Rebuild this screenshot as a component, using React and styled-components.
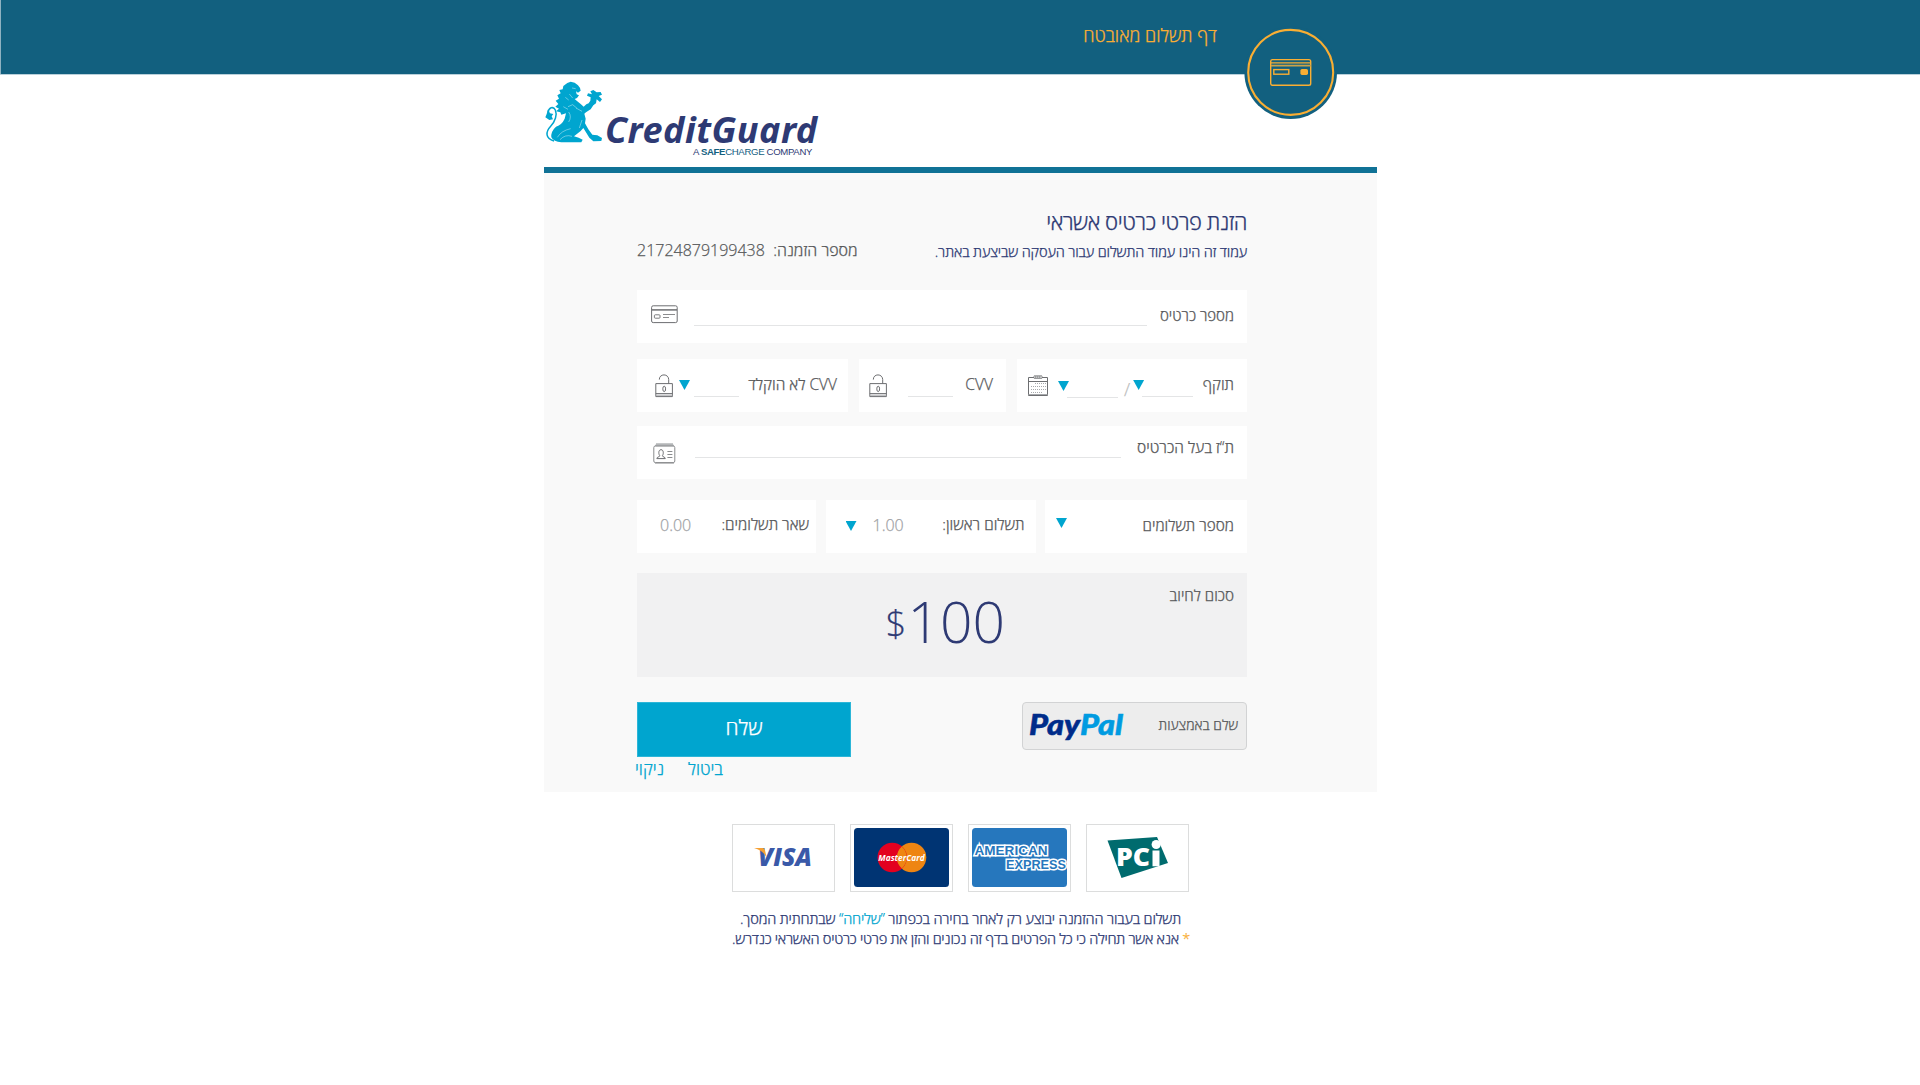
import React from "react";
import styled, { createGlobalStyle } from "styled-components";

const Global = createGlobalStyle`
  * { box-sizing: border-box; }
  body { margin: 0; background: #fff; font-family: "Open Sans", "Noto Sans", sans-serif; font-weight: 300; overflow: hidden; }
  svg { display: block; flex: none; }
`;

const Header = styled.header`
  height: 75px;
  background: #12607f;
  border-bottom: 1px solid #b9d0da;
  box-shadow: inset 1px 0 #8fb2c1;
`;
const Column = styled.div`
  position: relative;
  width: 833px;
  margin-left: 544px;
`;
const HeaderRow = styled(Column)`
  display: flex;
  justify-content: flex-end;
  padding: 21px 160px 0 0;
`;
const Badge = styled.svg`
  position: absolute;
  left: 700px;
  top: 26px;
`;
const Text = styled.span`
  direction: ${(p) => (p.$ltr ? "ltr" : "rtl")};
  white-space: pre;
  flex: none;
  display: block;
  color: ${(p) => p.$color || "#58595b"};
  font-size: ${(p) => p.$size || 15}px;
  line-height: ${(p) => p.$line || 28}px;
  letter-spacing: ${(p) => p.$track || 0}px;
  font-weight: 300;
  -webkit-text-stroke: ${(p) => (p.$stroke === undefined ? 0.25 : p.$stroke)}px;
  margin: ${(p) => p.$margin || 0};
`;
const Brand = styled.div`
  display: flex;
  height: 92px;
  padding: 6px 0 0 1px;
`;
const BrandWords = styled.div`
  display: flex;
  flex-direction: column;
  padding-top: 27px;
  margin-left: -2px;
`;
const BrandName = styled.div`
  font: italic 700 36px/44px "Noto Sans", "Open Sans", sans-serif;
  letter-spacing: 0.5px;
  color: #2e3a74;
  height: 38px;
`;
const Tagline = styled.div`
  font: 400 9.6px/12px "Liberation Sans", Arial, sans-serif;
  letter-spacing: -0.33px;
  color: #2e3a74;
  padding-left: 88px;
  white-space: nowrap;
  b { color: #12607f; font-weight: 700; }
  i { color: #12607f; font-style: normal; }
`;
const Panel = styled.main`
  height: 625px;
  border-top: 6px solid #107296;
  background: #f9f9f9;
  padding: 32px 130px 0 93px;
`;
const Heading = styled.div`
  display: flex;
  justify-content: flex-end;
`;
const SubHeading = styled.div`
  display: flex;
  justify-content: space-between;
  height: 53px;
`;
const Row = styled.div`
  display: flex;
  justify-content: space-between;
  margin-bottom: ${(p) => p.$after}px;
`;
const Field = styled.label`
  display: flex;
  align-items: flex-start;
  justify-content: flex-end;
  width: ${(p) => p.$width || 610}px;
  height: 53px;
  padding-right: ${(p) => (p.$end === undefined ? 13 : p.$end)}px;
  background: #fff;
`;
const Line = styled.span`
  flex: none;
  width: ${(p) => p.$width}px;
  height: 1px;
  margin: ${(p) => p.$margin};
  background: #e4e5e6;
`;
const Arrow = styled.span`
  flex: none;
  width: 11px;
  height: 10px;
  background: #00a5cf;
  clip-path: polygon(0 0, 100% 0, 50% 100%);
  margin: ${(p) => p.$margin};
`;
const Spacer = styled.span`
  flex: 1;
`;
const Inset = styled.span`
  flex: none;
  margin: ${(p) => p.$margin};
`;
const Total = styled.section`
  display: grid;
  grid-template-columns: 368px 1fr;
  height: 104px;
  background: #f1f1f2;
  margin-bottom: 25px;
`;
const Amount = styled.div`
  display: flex;
  justify-content: flex-end;
  gap: 1px;
  padding-top: 9px;
`;
const Actions = styled.div`
  display: flex;
  justify-content: space-between;
  align-items: flex-start;
`;
const Submit = styled.button`
  display: flex;
  justify-content: center;
  width: 214px;
  height: 55px;
  border: 1px solid #2cb6d8;
  background: #00a5cf;
  padding: 10px 0 0;
  font-family: inherit;
`;
const PayPal = styled.button`
  display: flex;
  width: 225px;
  height: 48px;
  border: 1.5px solid #d2d3d4;
  border-radius: 4px;
  background: #ededed;
  padding: 8px 8px 0 6px;
  font-family: inherit;
`;
const Links = styled.nav`
  display: flex;
  gap: 24px;
  margin-left: -2px;
`;
const Cards = styled.div`
  display: flex;
  gap: 15px;
  padding: 32px 0 0 188px;
`;
const Card = styled.div`
  display: flex;
  align-items: center;
  justify-content: center;
  width: 103px;
  height: 68px;
  padding-bottom: 1px;
  border: 1px solid #dcdddd;
`;
const Notes = styled.footer`
  display: flex;
  flex-direction: column;
  align-items: flex-end;
  padding: 16px 187px 0 0;
`;
const Accent = styled.span`
  color: ${(p) => p.$color};
`;

const Lion = () => (
  <svg width="62" height="64" viewBox="11 7 186 192">
    <path
      fill="#00a5cf"
      d="M66 22 L78 13 L88 9 L100 12 L110 20 Q117 27 118 36 L110 42 L104 38 L106 47 L113 50 L107 58 L100 61 L106 66 L118 76 L127 84 L135 77 L142 74 L147 66 L148 56 L137 51 L140 44 L152 47 L147 38 L156 34 L166 41 L178 40 L182 48 L172 52 L182 62 L176 70 L166 62 L164 74 L156 80 L148 92 L134 101 L129 105 L133 120 L131 134 L141 152 L153 168 L168 170 L182 178 L180 187 L156 188 L144 177 L126 148 L118 157 L98 173 L112 177 L124 183 L120 191 L60 191 Q37 190 30 176 Q28 158 44 144 Q62 138 70 120 L74 104 L60 108 L57 101 L44 98 L53 90 L42 84 L51 76 L43 66 L53 60 L48 50 L58 44 L54 34 L64 32 Z"
    />
    <path d="M38 187 C12 180 12 160 28 143 C42 128 48 108 42 94 C36 82 22 86 20 102" fill="none" stroke="#00a5cf" strokeWidth="4.500" />
    <path d="M20 92 L26 104 L36 106 L31 113 L35 122 L24 124 L12 116 L16 106 Z" fill="#00a5cf" />
    <g fill="none" stroke="#fff" strokeWidth="1.500" opacity="0.8">
      <path d="M48 176 Q60 156 88 150 M56 183 Q72 166 92 173 M82 100 Q92 114 82 130 M66 84 L80 92 M72 56 L82 64 M80 84 L94 78 L106 88 M84 46 L94 58 M114 148 L122 124 M92 28 L103 30 M104 88 L122 98" />
    </g>
  </svg>
);

const CardBadge = () => (
  <Badge width="94" height="94" viewBox="0 0 94 94">
    <circle cx="46.7" cy="46.6" r="46.3" fill="#12607f" />
    <circle cx="46.7" cy="46.4" r="42.5" fill="none" stroke="#f9ae33" strokeWidth="2.1" />
    <g fill="none" stroke="#f9ae33" strokeWidth="1.4">
      <rect x="26.7" y="33.6" width="40" height="25.6" rx="1.8" />
      <path d="M27 36.9h40" />
      <path d="M27 39.7h40" strokeWidth="1.8" stroke="#c8a24b" />
      <rect x="29.8" y="43.6" width="15" height="4.6" />
    </g>
    <rect x="56.4" y="42.9" width="7.6" height="6" rx="1.6" fill="#f9ae33" />
  </Badge>
);

const CardIcon = () => (
  <svg width="27" height="19" viewBox="0 0 27 19" fill="none" stroke="#6d6e71">
    <rect x=".6" y=".8" width="25.6" height="16.8" rx="1.6" />
    <path d="M1 4.9h25" strokeWidth="1.5" />
    <rect x="3.4" y="9.8" width="5.6" height="3.4" rx=".8" strokeWidth=".9" />
    <path d="M12 9.5h12M12 12.5h6" strokeWidth=".8" />
  </svg>
);
const LockIcon = () => (
  <svg width="19" height="24" viewBox="0 0 19 24" fill="none" stroke="#6d6e71">
    <path d="M.8 9.6h16.6v13H.8zM.8 19.6h16.6" />
    <path d="M.8 21.2h16.6" stroke="#a7a9ac" />
    <path d="M4.3 5.6C4.3 2.6 6.4.9 9 .9s4.7 1.9 4.7 4.7v4" />
    <ellipse cx="9.2" cy="14.9" rx="1.4" ry="2.7" />
  </svg>
);
const CalendarIcon = () => (
  <svg width="21" height="22" viewBox="0 0 21 22" fill="none" stroke="#6d6e71">
    <path d="M.5 2.500h19v18H.5zM.5 6.500h19" />
    <path d="M.5 19.500h19" stroke="#a7a9ac" />
    <path d="M7 8.500h11M3 11.500h15M3 14.500h15M3 17.500h11" strokeDasharray="1 1" stroke="#a7a9ac" />
    {[7, 9, 11, 13].map((x) => (
      <ellipse key={x} cx={x} cy="2.1" rx="1.1" ry="1.6" strokeWidth=".8" fill="#fff" />
    ))}
  </svg>
);
const IdIcon = () => (
  <svg width="23" height="21" viewBox="0 0 23 21" fill="none" stroke="#8a8c8e">
    <path d="M3 1h17M2 2.6h19" stroke="#b4b6b8" strokeWidth="1.5" />
    <rect x=".8" y="3" width="21" height="16.6" rx="1.6" />
    <path d="M3.8 15.6c0-1.8 2.8-1.6 3.1-2.7C5.600 11.6 5 6.8 8 6.7s2.6 4.9 1.3 6.2c.3 1.1 3 .9 3 2.700z" stroke="#6d6e71" />
    <path d="M14.4 8.5h5M14.4 11.5h5M14.4 14.5h5M2 20h19" />
  </svg>
);

const Word = styled.text`
  font-family: ${(p) => p.$family || '"Open Sans", sans-serif'};
  font-weight: ${(p) => p.$weight || 700};
  font-style: ${(p) => p.$slant || "normal"};
  font-size: ${(p) => p.$size}px;
`;

const PayPalLogo = () => (
  <svg width="98" height="34" viewBox="0 0 98 34">
    <Word x="0" y="24" $size="27.5" $weight="900" $slant="italic" $family="Lato, sans-serif" textLength="94" lengthAdjust="spacingAndGlyphs" fill="#002c8a" stroke="#002c8a" strokeWidth=".5">
      Pay<tspan fill="#009be1" stroke="#009be1">Pal</tspan>
    </Word>
  </svg>
);
const Visa = () => (
  <svg width="60" height="24" viewBox="0 0 60 24">
    <Word x="4" y="20.4" $size="24" $weight="800" $slant="italic" textLength="54" lengthAdjust="spacingAndGlyphs" fill="#3a59a8">VISA</Word>
    <path d="M0 2h8.500q2 0 2.500 2.300l1.500 7Q8.500 4 0 2z" fill="#f5a033" />
  </svg>
);
const MasterCard = () => (
  <svg width="95" height="59" viewBox="0 0 95 59">
    <rect width="95" height="59" rx="3.500" fill="#003473" />
    <circle cx="57.600" cy="29.500" r="14.700" fill="#ee8512" />
    <circle cx="38.200" cy="29.500" r="14.700" fill="#e3001f" />
    <path d="M47.800 18.500a14.700 14.700 0 0 1 0 22a14.700 14.700 0 0 1 0-22z" fill="#ee8512" />
    <Word x="24.300" y="32.500" $size="9" $slant="italic" textLength="46.500" lengthAdjust="spacingAndGlyphs" fill="#fff">MasterCard</Word>
  </svg>
);
const Amex = () => (
  <svg width="95" height="59" viewBox="0 0 95 59">
    <rect width="95" height="59" rx="3.500" fill="#2677bd" />
    <g fill="#2677bd" stroke="#fff" strokeWidth="3" paintOrder="stroke" strokeLinejoin="miter">
      <Word x="2.500" y="26.800" $size="13" $family='"Liberation Sans", sans-serif' textLength="73" lengthAdjust="spacingAndGlyphs">AMERICAN</Word>
      <Word x="34" y="41.200" $size="13" $family='"Liberation Sans", sans-serif' textLength="60" lengthAdjust="spacingAndGlyphs">EXPRESS</Word>
    </g>
  </svg>
);
const Pci = () => (
  <svg width="64" height="44" viewBox="0 0 64 44">
    <path d="M1.500 4.500L51 1l11 26-46.500 15z" fill="#006b6e" />
    <circle cx="50.200" cy="8.500" r="4.600" fill="#fff" />
    <Word x="10" y="30.300" $size="24" $weight="800" textLength="34" lengthAdjust="spacingAndGlyphs" fill="#fff">PC</Word>
    <path d="M46.500 14.500h7v15.800h-7z" fill="#fff" />
  </svg>
);

export default function App() {
  return (
    <>
      <Global />
      <Header>
        <HeaderRow>
          <Text $size={18.1} $color="#f9ae33">דף תשלום מאובטח</Text>
          <CardBadge />
        </HeaderRow>
      </Header>
      <Column>
        <Brand>
          <Lion />
          <BrandWords>
            <BrandName>CreditGuard</BrandName>
            <Tagline>A <b>SAFE</b><i>CHARGE</i> COMPANY</Tagline>
          </BrandWords>
        </Brand>
        <Panel>
          <Heading>
            <Text $size={22} $track={-0.45} $line={32} $color="#2e3a74">הזנת פרטי כרטיס אשראי</Text>
          </Heading>
          <SubHeading>
            <Text $size={16} $line={22} $margin="2px 0 0">מספר הזמנה:  21724879199438</Text>
            <Text $size={14.6} $track={-0.15} $line={24} $margin="2px 0 0" $color="#2e3a74">עמוד זה הינו עמוד התשלום עבור העסקה שביצעת באתר.</Text>
          </SubHeading>
          <Row $after={16}>
            <Field>
              <Inset $margin="15px 16px 0 14px"><CardIcon /></Inset>
              <Line $width={453} $margin="35px 0 0" />
              <Spacer />
              <Text $margin="11px 0 0">מספר כרטיס</Text>
            </Field>
          </Row>
          <Row $after={14}>
            <Field $width={211} $end={11}>
              <Inset $margin="15px 5px 0 18px"><LockIcon /></Inset>
              <Arrow $margin="21px 4px 0 0" />
              <Line $width={45} $margin="37px 0 0" />
              <Spacer />
              <Text $size={15.5} $margin="11px 0 0">CVV לא הוקלד</Text>
            </Field>
            <Field $width={147}>
              <Inset $margin="15px 20px 0 10px"><LockIcon /></Inset>
              <Line $width={45} $margin="37px 0 0" />
              <Spacer />
              <Text $size={15.6} $margin="11px 0 0">CVV</Text>
            </Field>
            <Field $width={230}>
              <Inset $margin="16px 9px 0 11px"><CalendarIcon /></Inset>
              <Arrow $margin="22px -2px 0 0" />
              <Line $width={51} $margin="38px 6px 0 0" />
              <Text $size={18} $color="#bcbec0" $margin="16px 3px 0 0">/</Text>
              <Arrow $margin="21px -2px 0 0" />
              <Line $width={51} $margin="37px 0 0" />
              <Spacer />
              <Text $size={15.3} $margin="11px 0 0">תוקף</Text>
            </Field>
          </Row>
          <Row $after={21}>
            <Field>
              <Inset $margin="17px 19px 0 16px"><IdIcon /></Inset>
              <Line $width={426} $margin="31px 0 0" />
              <Spacer />
              <Text $size={15.5} $margin="7px 0 0">ת“ז בעל הכרטיס</Text>
            </Field>
          </Row>
          <Row $after={20}>
            <Field $width={179} $end={7}>
              <Text $size={16} $color="#a0a2a5" $margin="11px 0 0 23px">0.00</Text>
              <Spacer />
              <Text $size={15.4} $margin="11px 0 0">שאר תשלומים:</Text>
            </Field>
            <Field $width={210} $end={11}>
              <Arrow $margin="21px 16px 0 20px" />
              <Text $size={16} $color="#a0a2a5" $margin="11px 0 0">1.00</Text>
              <Spacer />
              <Text $size={15.4} $margin="11px 0 0">תשלום ראשון:</Text>
            </Field>
            <Field $width={202}>
              <Arrow $margin="18px 0 0 11px" />
              <Spacer />
              <Text $size={15.3} $margin="11px 0 0">מספר תשלומים</Text>
            </Field>
          </Row>
          <Total>
            <Amount>
              <Text $ltr $size={36} $line={84} $color="#2e3a74">$</Text>
              <Text $ltr $size={57} $line={78} $stroke={0} $color="#2e3a74">100</Text>
            </Amount>
            <Heading>
              <Text $size={15.2} $margin="8px 13px 0 0">סכום לחיוב</Text>
            </Heading>
          </Total>
          <Actions>
            <Submit><Text $size={21} $color="#fff">שלח</Text></Submit>
            <PayPal>
              <PayPalLogo />
              <Spacer />
              <Text $size={14}>שלם באמצעות</Text>
            </PayPal>
          </Actions>
          <Links>
            <Text $size={17} $line={24} $color="#00a5cf">ניקוי</Text>
            <Text $size={17} $line={24} $color="#00a5cf">ביטול</Text>
          </Links>
        </Panel>
        <Cards>
          <Card><Visa /></Card>
          <Card><MasterCard /></Card>
          <Card><Amex /></Card>
          <Card><Pci /></Card>
        </Cards>
        <Notes>
          <Text $size={14.6} $track={-0.17} $line={20} $color="#2e3a74" $margin="0 9px 0 0">תשלום בעבור ההזמנה יבוצע רק לאחר בחירה בכפתור <Accent $color="#00a5cf">”שליחה“</Accent> שבתחתית המסך.</Text>
          <Text $size={14.6} $track={-0.28} $line={20} $color="#2e3a74"><Accent $color="#f9ae33">*</Accent> אנא אשר תחילה כי כל הפרטים בדף זה נכונים והזן את פרטי כרטיס האשראי כנדרש.</Text>
        </Notes>
      </Column>
    </>
  );
}
